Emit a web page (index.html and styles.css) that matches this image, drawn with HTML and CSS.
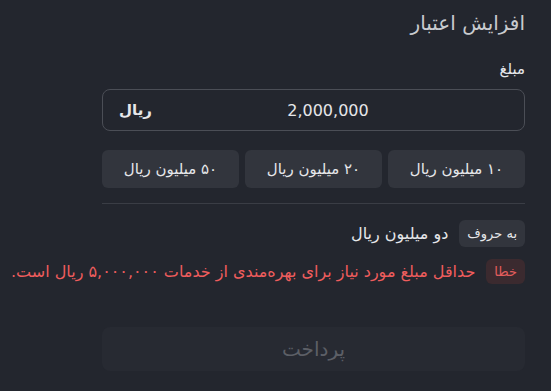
FILE: index.html
```html
<!DOCTYPE html>
<html lang="fa" dir="rtl">
<head>
    <meta charset="UTF-8">
    <meta name="viewport" content="width=device-width, initial-scale=1.0">
    <title>افزایش اعتبار</title>
    <link rel="stylesheet" href="styles.css">
</head>
<body>
    <div class="panel">
        <h1 class="title">افزایش اعتبار</h1>
        <div class="form">
            <label class="label">مبلغ</label>
            <div class="amount">
                <span class="amount-value">2,000,000</span>
                <span class="amount-unit">ریال</span>
            </div>
            <div class="presets">
                <a href="#" class="preset">۱۰ میلیون ریال</a>
                <a href="#" class="preset">۲۰ میلیون ریال</a>
                <a href="#" class="preset">۵۰ میلیون ریال</a>
            </div>
            <div class="divider"></div>
            <div class="row">
                <span class="tag">به حروف</span>
                <span class="words">دو میلیون ریال</span>
            </div>
            <div class="row error">
                <span class="tag tag-error">خطا</span>
                <span class="error-text">حداقل مبلغ مورد نیاز برای بهره‌مندی از خدمات ۵,۰۰۰,۰۰۰ ریال است.</span>
            </div>
            <button class="pay" disabled>پرداخت</button>
        </div>
    </div>
</body>
</html>
```

FILE: styles.css
```css
body {
    margin: 0;
    background: #23262e;
    color: #e6e7ea;
    font-family: 'DejaVu Sans', 'Noto Sans', sans-serif;
    overflow: hidden;
    height: 391px;
}

.panel {
    padding: 9px 26px 0 0;
}

.title {
    margin: 0;
    font-size: 20px;
    font-weight: normal;
    color: #c9cbcf;
    line-height: 28px;
}

.form {
    width: 423px;
    display: flex;
    flex-direction: column;
}

.label {
    font-size: 15px;
    margin-top: 22px;
    line-height: 20px;
}

.amount {
    margin-top: 10px;
    height: 40px;
    border: 1px solid #4b4e56;
    border-radius: 8px;
    display: flex;
    align-items: center;
    padding: 0 16px;
}

.amount-value {
    flex: 1;
    text-align: center;
    font-size: 16px;
    direction: ltr;
    padding-right: 4px;
}

.amount-unit {
    font-weight: bold;
    font-size: 15px;
}

.presets {
    margin-top: 19px;
    display: grid;
    grid-template-columns: repeat(3, 1fr);
    gap: 6px;
}

.preset {
    height: 38px;
    border-radius: 6px;
    background: #32353d;
    color: #e6e7ea;
    text-decoration: none;
    font-size: 15px;
    display: flex;
    align-items: center;
    justify-content: center;
}

.divider {
    margin-top: 15px;
    height: 1px;
    background: #3a3d45;
}

.row {
    display: flex;
    align-items: center;
    gap: 11px;
    margin-top: 16px;
    white-space: nowrap;
}

.row.error {
    margin-top: 12px;
}

.tag {
    height: 27px;
    padding: 0 8px;
    border-radius: 6px;
    background: #32353d;
    font-size: 13px;
    display: flex;
    align-items: center;
}

.words {
    font-size: 16px;
}

.tag-error {
    height: 25px;
    padding: 0 8px;
    background: #3b2a2f;
    color: #e35d5d;
}

.error-text {
    color: #ef5d5d;
    font-size: 16px;
}

.pay {
    margin-top: 43px;
    height: 44px;
    border: none;
    border-radius: 8px;
    background: #272a32;
    color: #5c5f66;
    font-family: inherit;
    font-size: 20px;
}
```
